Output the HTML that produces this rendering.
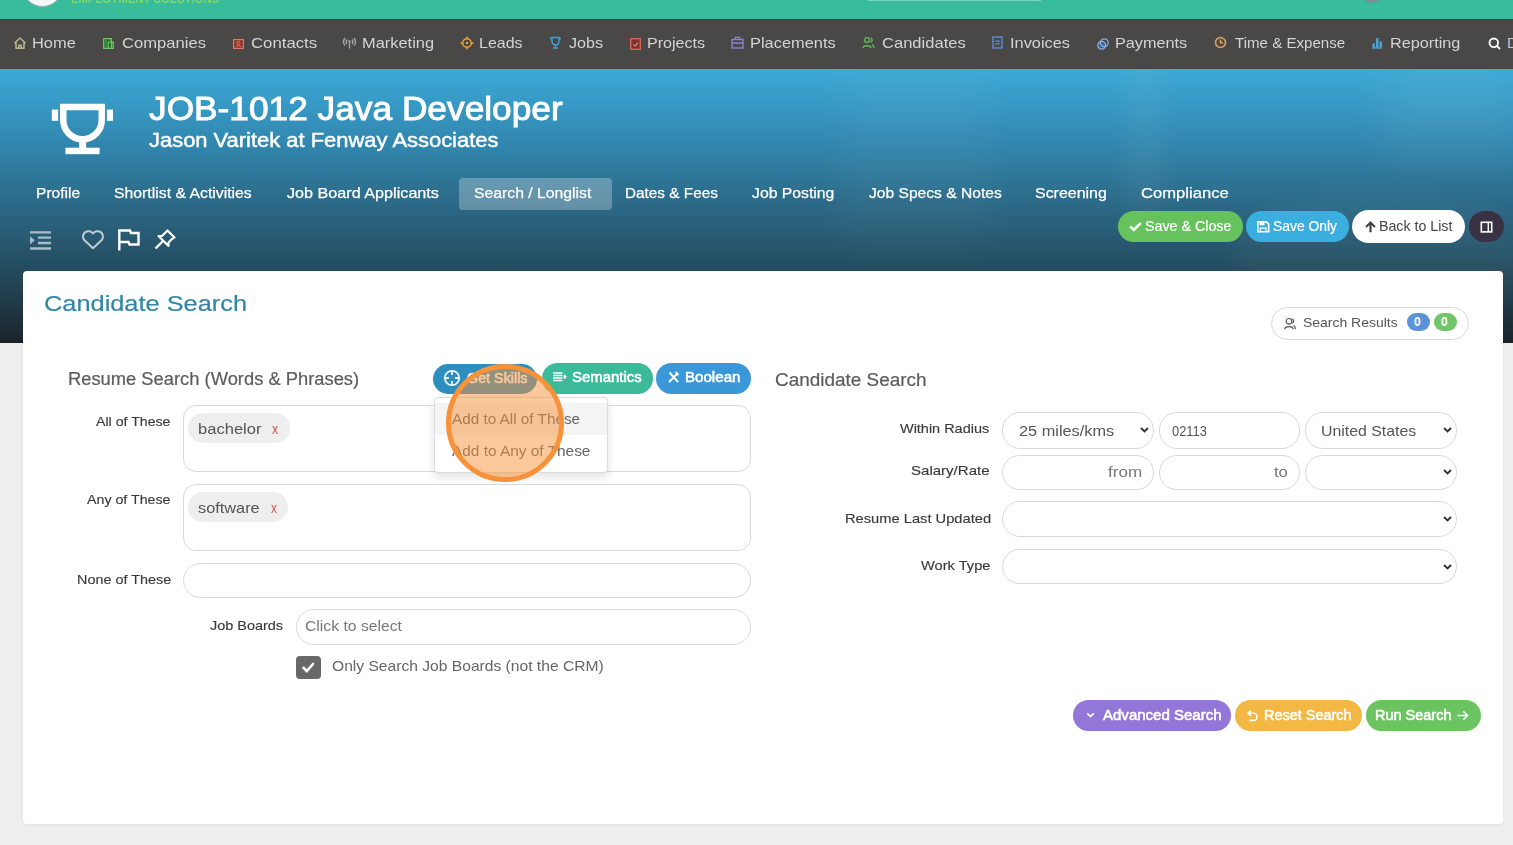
<!DOCTYPE html>
<html><head><meta charset="utf-8">
<style>
*{box-sizing:border-box;margin:0;padding:0}
html,body{width:1513px;height:845px;overflow:hidden;background:#eeeeee;font-family:"Liberation Sans",sans-serif}
body{position:relative}
.a{position:absolute}
.tx{position:absolute;line-height:1;white-space:nowrap;transform-origin:0 0}
svg{position:absolute;overflow:visible}
#topbar{left:0;top:0;width:1513px;height:19px;background:#38bc9b}
#nav{left:0;top:19px;width:1513px;height:50px;background:#4a4847}
#hero{left:0;top:69px;width:1513px;height:274px;background:linear-gradient(180deg,#3ca8d5 0px,#3697c3 40px,#3184ab 80px,#2d7090 120px,#295e78 160px,#244b5e 200px,#1f3744 240px,#1b2329 274px)}
#card{left:23px;top:271px;width:1480px;height:553px;background:#fff;border-radius:4px;box-shadow:0 1px 3px rgba(0,0,0,.06)}
.pill{position:absolute;border-radius:999px}
.inp{position:absolute;border:1px solid #d9d9d9;background:#fff;border-radius:18px}
</style></head><body>
<div id="topbar" class="a"></div>
<!-- logo -->
<div class="a" style="left:22px;top:-34px;width:41px;height:41px;border-radius:50%;background:#f4f6fa;border:1px solid #9aa;"></div>
<div class="a" style="left:866px;top:-30px;width:177px;height:31px;border-radius:4px;background:#fff;border:1px solid #7cd6c0"></div>
<div class="a" style="left:1355px;top:-30px;width:33px;height:33px;border-radius:50%;background:#8d8a90;border:1px solid #4a9"></div>
<div id="nav" class="a"></div>
<div id="hero" class="a"></div>
<div class="a" style="left:0;top:69px;width:1513px;height:274px;overflow:hidden">
<div class="a" style="left:840px;top:-20px;width:150px;height:200px;filter:blur(18px);background:rgba(255,255,255,.03)"></div>
<div class="a" style="left:1125px;top:-20px;width:40px;height:160px;filter:blur(10px);background:rgba(255,255,255,.045)"></div>
<div class="a" style="left:1380px;top:-10px;width:140px;height:100px;filter:blur(20px);background:rgba(255,255,255,.05)"></div>
<div class="a" style="left:1230px;top:120px;width:300px;height:140px;border-radius:50%;filter:blur(12px);background:rgba(255,255,255,.03)"></div>
</div>
<div class="a" style="left:459px;top:178px;width:153px;height:32px;border-radius:4px;background:rgba(255,255,255,.27)"></div>
<div id="card" class="a"></div>
<!-- nav icons -->
<svg style="left:13px;top:36px" width="14" height="14" viewBox="0 0 14 14"><path d="M1.5 7.2 L7 2 L12.5 7.2 M3 6 V12.3 H11 V6 M5.8 12.3 V9.3 H8.2 V12.3" fill="none" stroke="#b9b98f" stroke-width="1.5" stroke-linejoin="round"/></svg>
<svg style="left:103px;top:38px" width="11" height="11" viewBox="0 0 11 11"><path d="M0.7 10.3V0.7H8.3V4.2H10.3V10.3Z" fill="#2a6e2a" stroke="#6cc46c" stroke-width="1.3"/><path d="M5.3 10.3V4.2H8.5V10.3" fill="none" stroke="#6cc46c" stroke-width="1.1"/><path d="M2.6 2.8H3.6M2.6 4.8H3.6M2.6 6.8H3.6M2.6 8.6H3.6" stroke="#6cc46c" stroke-width="0.9"/></svg>
<svg style="left:232.5px;top:38.5px" width="11" height="10" viewBox="0 0 11 10"><rect x="0.6" y="0.6" width="9.8" height="8.8" fill="#8a3328" stroke="#e07a6a" stroke-width="1.2"/><circle cx="5.5" cy="3.8" r="1.6" fill="none" stroke="#e8806e" stroke-width="1"/><path d="M2.8 8.2c.5-2 4.9-2 5.4 0" fill="none" stroke="#e8806e" stroke-width="1"/></svg>
<svg style="left:343px;top:36px" width="13" height="13" viewBox="0 0 13 13"><circle cx="6.5" cy="5.5" r="1.3" fill="#aaa"/><path d="M6.5 6.5V12.5M4 3.5a3.5 3.5 0 0 0 0 4.5M9 3.5a3.5 3.5 0 0 1 0 4.5M2 2a6 6 0 0 0 0 7.5M11 2a6 6 0 0 1 0 7.5" fill="none" stroke="#aaa" stroke-width="1.3"/></svg>
<svg style="left:460px;top:36px" width="14" height="14" viewBox="0 0 14 14"><circle cx="7" cy="7" r="4.3" fill="none" stroke="#e8a835" stroke-width="1.5"/><circle cx="7" cy="7" r="1.3" fill="#e8a835"/><path d="M7 0.5V2.7M7 11.3V13.5M0.5 7H2.7M11.3 7H13.5" stroke="#e8a835" stroke-width="1.5"/></svg>
<svg style="left:549px;top:36px" width="13" height="13" viewBox="0 0 13 13"><path d="M3 1.5H10V5.5A3.5 3.5 0 0 1 3 5.5Z" fill="none" stroke="#3ea4d8" stroke-width="1.5"/><path d="M1 2.5H3M10 2.5H12M6.5 9V11M4 12H9" stroke="#3ea4d8" stroke-width="1.5"/></svg>
<svg style="left:629.5px;top:37.5px" width="11" height="12" viewBox="0 0 11 12"><rect x="0.7" y="0.7" width="9.6" height="10.6" fill="#7e332c" stroke="#d96a62" stroke-width="1.3"/><path d="M3.3 6.3L5.2 8L8 4.6" fill="none" stroke="#e08880" stroke-width="1.1"/></svg>
<svg style="left:731px;top:36px" width="13" height="13" viewBox="0 0 13 13"><rect x="1" y="3.5" width="11" height="8.5" fill="none" stroke="#8e7fd0" stroke-width="1.4"/><path d="M4.3 3.5V1.3H8.7V3.5M1 7H12M6.5 6.5V8" fill="none" stroke="#8e7fd0" stroke-width="1.3"/></svg>
<svg style="left:862px;top:36px" width="13" height="13" viewBox="0 0 13 13"><circle cx="5" cy="4" r="2.4" fill="none" stroke="#5cb85c" stroke-width="1.4"/><path d="M1 12.3c0-3.5 8-3.5 8 0M8.5 1.8a2.3 2.3 0 0 1 0 4.4M10 8.5c1.5.6 2 2 2 3.8" fill="none" stroke="#5cb85c" stroke-width="1.4"/></svg>
<svg style="left:992px;top:36px" width="11" height="13" viewBox="0 0 11 13"><rect x="1" y="1" width="9" height="11" fill="none" stroke="#5a8ed8" stroke-width="1.4"/><path d="M3.3 5.2H7.7M3.3 7.8H7.7" stroke="#5a8ed8" stroke-width="1.2"/></svg>
<svg style="left:1097px;top:37.5px" width="12" height="12" viewBox="0 0 12 12"><circle cx="4.7" cy="7.3" r="3.9" fill="#3d5f9a" stroke="#8fb0e0" stroke-width="1.3"/><circle cx="7.3" cy="4.7" r="3.9" fill="none" stroke="#8fb0e0" stroke-width="1.3"/></svg>
<svg style="left:1214px;top:36px" width="13" height="13" viewBox="0 0 13 13"><circle cx="6.5" cy="6.5" r="5" fill="none" stroke="#e0a060" stroke-width="1.6"/><path d="M6.5 3.5V6.8H9" fill="none" stroke="#e0a060" stroke-width="1.4"/></svg>
<svg style="left:1371px;top:36px" width="12" height="13" viewBox="0 0 12 13"><path d="M1 12H11" stroke="#4aa5d5" stroke-width="1.4"/><rect x="1.5" y="7.5" width="2.5" height="4" fill="#4aa5d5"/><rect x="5" y="2" width="2.5" height="9.5" fill="#4aa5d5"/><rect x="8.5" y="5.5" width="2.5" height="6" fill="#4aa5d5"/></svg>
<svg style="left:1487.5px;top:37px" width="13" height="13" viewBox="0 0 13 13"><circle cx="5.8" cy="5.8" r="4.3" fill="none" stroke="#fff" stroke-width="1.8"/><path d="M9 9L12 12" stroke="#fff" stroke-width="1.8"/></svg>
<!-- trophy -->
<svg style="left:51px;top:103px" width="63" height="52" viewBox="0 0 63 52"><path d="M12.25 4 H50.75 V17 A19.25 19.25 0 0 1 12.25 17 Z" fill="none" stroke="#fff" stroke-width="6.5"/><rect x="0.8" y="6.6" width="6.3" height="11.2" fill="#fff"/><rect x="55.9" y="6.6" width="6.1" height="11.2" fill="#fff"/><rect x="28.2" y="38" width="7" height="8" fill="#fff"/><rect x="14.4" y="44.7" width="34.2" height="6.5" fill="#fff"/></svg>
<!-- outdent / heart / flag / pin -->
<svg style="left:30px;top:231px" width="21" height="19" viewBox="0 0 21 19"><path d="M0 1.3H21M8 6.7H21M8 12H21M0 17.5H21" stroke="#a6bcc8" stroke-width="2.3"/><path d="M0 5.2L4.8 9.3L0 13.4Z" fill="#a6bcc8"/></svg>
<svg style="left:81px;top:230px" width="24" height="20" viewBox="0 0 24 20"><path d="M12 18.3 L3 9.8 A5.2 5.2 0 0 1 12 3.5 A5.2 5.2 0 0 1 21 9.8 Z" fill="none" stroke="#c3cbcf" stroke-width="2" stroke-linejoin="round"/></svg>
<svg style="left:118px;top:229px" width="22" height="22" viewBox="0 0 22 22"><path d="M1.3 21.5V1.5H12L13 4H20.5V15.5H11.5L10.5 13H1.3" fill="none" stroke="#fff" stroke-width="2.4" stroke-linejoin="miter"/></svg>
<svg style="left:154px;top:229px" width="22" height="21" viewBox="0 0 22 21"><path d="M13.5 1.5L20.5 8.5L18.5 9.5L14.5 13.5L14.5 17L4.5 7L8 7L12 3Z" fill="none" stroke="#fff" stroke-width="2.2" stroke-linejoin="round"/><path d="M9 12L1.5 19.5" stroke="#fff" stroke-width="2.4"/></svg>
<!-- header buttons -->
<div class="pill" style="left:1118px;top:211px;width:125px;height:31px;background:#66c25d"></div>
<svg style="left:1129px;top:221px" width="13" height="11" viewBox="0 0 13 11"><path d="M1.2 5.5L4.8 9L11.8 1.8" fill="none" stroke="#fff" stroke-width="2.6"/></svg>
<div class="pill" style="left:1246px;top:211px;width:103px;height:31px;background:#3baee0"></div>
<svg style="left:1257px;top:221px" width="12.5" height="11.5" viewBox="0 0 12.5 11.5"><path d="M0.8 0.8H9.3L11.7 3.2V10.7H0.8Z" fill="none" stroke="#fff" stroke-width="1.6"/><rect x="2.5" y="1" width="5" height="3.2" fill="#fff"/><path d="M3.4 10.5V7.2H9.1V10.5" fill="none" stroke="#fff" stroke-width="1.3"/></svg>
<div class="pill" style="left:1352px;top:210px;width:113px;height:33px;background:#fff"></div>
<svg style="left:1364px;top:220px" width="13" height="13" viewBox="0 0 13 13"><path d="M6.5 1L1.3 6.2L2.8 7.7L5.4 5.1V12.3H7.6V5.1L10.2 7.7L11.7 6.2Z" fill="#444"/></svg>
<div class="pill" style="left:1469px;top:211px;width:35px;height:31px;background:#3a3242"></div>
<svg style="left:1480px;top:220.5px" width="13" height="12" viewBox="0 0 13 12"><rect x="1.3" y="1.3" width="10.4" height="9.6" fill="none" stroke="#fff" stroke-width="1.6"/><path d="M8.3 1.3V10.9" stroke="#fff" stroke-width="1.4"/></svg>
<!-- search results pill -->
<div class="pill" style="left:1271px;top:307px;width:198px;height:33px;border:1px solid #d9d9d9;background:#fff"></div>
<svg style="left:1284px;top:317px" width="12" height="13" viewBox="0 0 12 13"><circle cx="5" cy="4.3" r="2.8" fill="none" stroke="#555" stroke-width="1.2"/><path d="M0.8 12.3c0-3.6 8.4-3.6 8.4 0M8.3 1.7a2.6 2.6 0 0 1 0 4.6M9.6 8.3c1.2.6 1.8 2 1.8 4" fill="none" stroke="#555" stroke-width="1.2"/></svg>
<div class="pill" style="left:1407px;top:313px;width:23px;height:18px;background:#5b93d9"></div>
<div class="pill" style="left:1434px;top:313px;width:23px;height:18px;background:#72c66a"></div>
<!-- skills buttons -->
<div class="pill" style="left:433px;top:364px;width:104px;height:30px;background:#2e8fbf"></div>
<svg style="left:443px;top:369px" width="18" height="18" viewBox="0 0 18 18"><circle cx="9" cy="9" r="7.2" fill="none" stroke="#e8f6fa" stroke-width="1.8"/><path d="M9 1.5V6M9 12V16.5M1.5 9H6M12 9H16.5" stroke="#e8f6fa" stroke-width="1.8"/></svg>
<div class="pill" style="left:542px;top:363px;width:111px;height:31px;background:#3cb998"></div>
<svg style="left:552.5px;top:372px" width="14" height="10" viewBox="0 0 14 10"><path d="M0 1H9.5M0 3.5H9.5M0 6H9.5M0 8.5H9.5" stroke="#fff" stroke-width="1.7"/><path d="M11.7 2.2L13.7 4.8L11.7 7.4L10.3 4.8Z" fill="#fff"/></svg>
<div class="pill" style="left:656px;top:363px;width:95px;height:31px;background:#3a98d8"></div>
<svg style="left:668px;top:371px" width="11" height="12" viewBox="0 0 11 12"><path d="M1 11L10 2M1.5 1.5L10 11M7.5 1L10.5 4" fill="none" stroke="#fff" stroke-width="1.9"/></svg>
<!-- left inputs -->
<div class="inp" style="left:183px;top:405px;width:568px;height:67px;border-radius:13px"></div>
<div class="pill" style="left:188px;top:413px;width:102px;height:30px;background:#eeeeee"></div>
<div class="inp" style="left:183px;top:484px;width:568px;height:67px;border-radius:13px"></div>
<div class="pill" style="left:188px;top:492px;width:100px;height:30px;background:#eeeeee"></div>
<div class="inp" style="left:183px;top:563px;width:568px;height:35px"></div>
<div class="inp" style="left:296px;top:609px;width:455px;height:36px"></div>
<div class="a" style="left:296px;top:656px;width:25px;height:23px;border-radius:4px;background:#686868"></div>
<svg style="left:301px;top:661px" width="15" height="13" viewBox="0 0 15 13"><path d="M2.5 6.8L5.8 10L12 3" fill="none" stroke="#fff" stroke-width="2.6" stroke-linecap="round"/></svg>
<!-- right inputs -->
<div class="inp" style="left:1002px;top:412px;width:152px;height:37px"></div>
<div class="inp" style="left:1159px;top:412px;width:141px;height:37px"></div>
<div class="inp" style="left:1305px;top:412px;width:152px;height:37px"></div>
<div class="inp" style="left:1002px;top:455px;width:152px;height:35px"></div>
<div class="inp" style="left:1159px;top:455px;width:141px;height:35px"></div>
<div class="inp" style="left:1305px;top:455px;width:152px;height:35px"></div>
<div class="inp" style="left:1002px;top:501px;width:455px;height:36px"></div>
<div class="inp" style="left:1002px;top:549px;width:455px;height:35px"></div>
<svg style="left:1140px;top:427px" width="9" height="6" viewBox="0 0 9 6"><path d="M1 1L4.5 4.5L8 1" fill="none" stroke="#333" stroke-width="1.9"/></svg>
<svg style="left:1443px;top:427px" width="9" height="6" viewBox="0 0 9 6"><path d="M1 1L4.5 4.5L8 1" fill="none" stroke="#333" stroke-width="1.9"/></svg>
<svg style="left:1443px;top:469px" width="9" height="6" viewBox="0 0 9 6"><path d="M1 1L4.5 4.5L8 1" fill="none" stroke="#333" stroke-width="1.9"/></svg>
<svg style="left:1443px;top:516px" width="9" height="6" viewBox="0 0 9 6"><path d="M1 1L4.5 4.5L8 1" fill="none" stroke="#333" stroke-width="1.9"/></svg>
<svg style="left:1443px;top:564px" width="9" height="6" viewBox="0 0 9 6"><path d="M1 1L4.5 4.5L8 1" fill="none" stroke="#333" stroke-width="1.9"/></svg>
<!-- bottom buttons -->
<div class="pill" style="left:1073px;top:700px;width:158px;height:31px;background:#9277d8"></div>
<svg style="left:1086px;top:712px" width="9" height="6" viewBox="0 0 9 6"><path d="M1.3 1.3L4.5 4.5L7.7 1.3" fill="none" stroke="#fff" stroke-width="1.7"/></svg>
<div class="pill" style="left:1235px;top:700px;width:127px;height:31px;background:#f3b743"></div>
<svg style="left:1246px;top:709px" width="13" height="13" viewBox="0 0 13 13"><path d="M3 4.2H7.5A3.6 3.6 0 0 1 7.5 11.4H3.5M5 1.5L2.2 4.2L5 7" fill="none" stroke="#fff" stroke-width="1.6"/></svg>
<div class="pill" style="left:1366px;top:700px;width:115px;height:31px;background:#6cc460"></div>
<svg style="left:1457px;top:710px" width="12" height="11" viewBox="0 0 12 11"><path d="M0.5 5.5H10.5M6.3 1.3L10.5 5.5L6.3 9.7" fill="none" stroke="#fff" stroke-width="1.6"/></svg>
<!-- dropdown -->
<div class="a" style="left:434px;top:397px;width:174px;height:76px;background:#fff;border:1px solid #dcdcdc;border-radius:4px;box-shadow:0 4px 10px rgba(0,0,0,.12)"></div>
<div class="a" style="left:435px;top:403px;width:172px;height:32px;background:#f4f4f4"></div>

<div class="tx" id="t0" style="left:31.9px;top:35.30px;font-size:15px;color:#d4d4d4;transform:scaleX(1.0939);">Home</div>
<div class="tx" id="t1" style="left:121.6px;top:35.30px;font-size:15px;color:#d4d4d4;transform:scaleX(1.1065);">Companies</div>
<div class="tx" id="t2" style="left:251.0px;top:35.30px;font-size:15px;color:#d4d4d4;transform:scaleX(1.1177);">Contacts</div>
<div class="tx" id="t3" style="left:361.9px;top:35.30px;font-size:15px;color:#d4d4d4;transform:scaleX(1.0943);">Marketing</div>
<div class="tx" id="t4" style="left:478.9px;top:35.30px;font-size:15px;color:#d4d4d4;transform:scaleX(1.0668);">Leads</div>
<div class="tx" id="t5" style="left:568.5px;top:35.30px;font-size:15px;color:#d4d4d4;transform:scaleX(1.0742);">Jobs</div>
<div class="tx" id="t6" style="left:646.9px;top:35.30px;font-size:15px;color:#d4d4d4;transform:scaleX(1.0724);">Projects</div>
<div class="tx" id="t7" style="left:749.9px;top:35.30px;font-size:15px;color:#d4d4d4;transform:scaleX(1.0928);">Placements</div>
<div class="tx" id="t8" style="left:881.8px;top:35.30px;font-size:15px;color:#d4d4d4;transform:scaleX(1.1036);">Candidates</div>
<div class="tx" id="t9" style="left:1010.3px;top:35.30px;font-size:15px;color:#d4d4d4;transform:scaleX(1.0910);">Invoices</div>
<div class="tx" id="t10" style="left:1115.3px;top:35.30px;font-size:15px;color:#d4d4d4;transform:scaleX(1.0829);">Payments</div>
<div class="tx" id="t11" style="left:1234.7px;top:35.30px;font-size:15px;color:#d4d4d4;transform:scaleX(1.0060);">Time &amp; Expense</div>
<div class="tx" id="t12" style="left:1389.9px;top:35.30px;font-size:15px;color:#d4d4d4;transform:scaleX(1.0817);">Reporting</div>
<div class="tx" id="t13" style="left:1507.0px;top:35.30px;font-size:15px;color:#c4c4c4;">D</div>
<div class="tx" id="t14" style="left:71.0px;top:-6.66px;font-size:12px;color:#7fd66a;font-weight:bold;transform:scaleX(0.9380);">EMPLOYMENT SOLUTIONS</div>
<div class="tx" id="t15" style="left:148.7px;top:92.37px;font-size:33px;color:#fff;-webkit-text-stroke:0.9px #fff;transform:scaleX(1.0688);">JOB-1012 Java Developer</div>
<div class="tx" id="t16" style="left:148.7px;top:131.09px;font-size:19.5px;color:#fff;-webkit-text-stroke:0.45px #fff;transform:scaleX(1.1246);">Jason Varitek at Fenway Associates</div>
<div class="tx" id="t17" style="left:35.9px;top:185.30px;font-size:15px;color:#fff;-webkit-text-stroke:0.25px #fff;transform:scaleX(1.0370);">Profile</div>
<div class="tx" id="t18" style="left:113.9px;top:185.30px;font-size:15px;color:#fff;-webkit-text-stroke:0.25px #fff;transform:scaleX(1.0526);">Shortlist &amp; Activities</div>
<div class="tx" id="t19" style="left:287.0px;top:185.30px;font-size:15px;color:#fff;-webkit-text-stroke:0.25px #fff;transform:scaleX(1.0782);">Job Board Applicants</div>
<div class="tx" id="t20" style="left:473.8px;top:185.30px;font-size:15px;color:#fff;-webkit-text-stroke:0.25px #fff;transform:scaleX(1.0501);">Search / Longlist</div>
<div class="tx" id="t21" style="left:625.3px;top:185.30px;font-size:15px;color:#fff;-webkit-text-stroke:0.25px #fff;transform:scaleX(1.0216);">Dates &amp; Fees</div>
<div class="tx" id="t22" style="left:752.2px;top:185.30px;font-size:15px;color:#fff;-webkit-text-stroke:0.25px #fff;transform:scaleX(1.0507);">Job Posting</div>
<div class="tx" id="t23" style="left:868.8px;top:185.30px;font-size:15px;color:#fff;-webkit-text-stroke:0.25px #fff;transform:scaleX(1.0404);">Job Specs &amp; Notes</div>
<div class="tx" id="t24" style="left:1035.4px;top:185.30px;font-size:15px;color:#fff;-webkit-text-stroke:0.25px #fff;transform:scaleX(1.0625);">Screening</div>
<div class="tx" id="t25" style="left:1141.0px;top:185.30px;font-size:15px;color:#fff;-webkit-text-stroke:0.25px #fff;transform:scaleX(1.1083);">Compliance</div>
<div class="tx" id="t26" style="left:1145.4px;top:219.33px;font-size:14.5px;color:#fff;-webkit-text-stroke:0.2px #fff;transform:scaleX(0.9831);">Save &amp; Close</div>
<div class="tx" id="t27" style="left:1272.5px;top:219.33px;font-size:14.5px;color:#fff;-webkit-text-stroke:0.2px #fff;transform:scaleX(0.9565);">Save Only</div>
<div class="tx" id="t28" style="left:1379.4px;top:219.33px;font-size:14.5px;color:#444;transform:scaleX(0.9794);">Back to List</div>
<div class="tx" id="t29" style="left:43.9px;top:292.95px;font-size:22.5px;color:#2f86a6;-webkit-text-stroke:0.2px #2f86a6;transform:scaleX(1.1271);">Candidate Search</div>
<div class="tx" id="t30" style="left:1302.6px;top:315.67px;font-size:13.5px;color:#555;transform:scaleX(1.0339);">Search Results</div>
<div class="tx" id="t31" style="left:1414.0px;top:315.84px;font-size:12px;color:#fff;font-weight:bold;">0</div>
<div class="tx" id="t32" style="left:1441.0px;top:315.84px;font-size:12px;color:#fff;font-weight:bold;">0</div>
<div class="tx" id="t33" style="left:68.3px;top:371.19px;font-size:17.5px;color:#5c5c5c;-webkit-text-stroke:0.2px #5c5c5c;transform:scaleX(1.0478);">Resume Search (Words &amp; Phrases)</div>
<div class="tx" id="t34" style="left:466.5px;top:371.15px;font-size:14px;color:#fff;-webkit-text-stroke:0.55px #fff;transform:scaleX(1.0233);">Get Skills</div>
<div class="tx" id="t35" style="left:571.8px;top:370.15px;font-size:14px;color:#fff;-webkit-text-stroke:0.55px #fff;transform:scaleX(1.0649);">Semantics</div>
<div class="tx" id="t36" style="left:684.9px;top:370.15px;font-size:14px;color:#fff;-webkit-text-stroke:0.55px #fff;transform:scaleX(1.0788);">Boolean</div>
<div class="tx" id="t37" style="left:775.3px;top:371.59px;font-size:17.5px;color:#5c5c5c;-webkit-text-stroke:0.2px #5c5c5c;transform:scaleX(1.0814);">Candidate Search</div>
<div class="tx" id="t38" style="left:96.4px;top:414.77px;font-size:13.5px;color:#3a3a3a;-webkit-text-stroke:0.15px #3a3a3a;transform:scaleX(1.0484);">All of These</div>
<div class="tx" id="t39" style="left:87.4px;top:493.27px;font-size:13.5px;color:#3a3a3a;-webkit-text-stroke:0.15px #3a3a3a;transform:scaleX(1.0527);">Any of These</div>
<div class="tx" id="t40" style="left:76.7px;top:572.57px;font-size:13.5px;color:#3a3a3a;-webkit-text-stroke:0.15px #3a3a3a;transform:scaleX(1.0661);">None of These</div>
<div class="tx" id="t41" style="left:210.4px;top:618.57px;font-size:13.5px;color:#3a3a3a;-webkit-text-stroke:0.15px #3a3a3a;transform:scaleX(1.0694);">Job Boards</div>
<div class="tx" id="t42" style="left:197.5px;top:420.60px;font-size:15px;color:#555;transform:scaleX(1.1035);">bachelor</div>
<div class="tx" id="t43" style="left:271.8px;top:420.60px;font-size:15px;color:#d9534f;transform:scaleX(0.8250);">x</div>
<div class="tx" id="t44" style="left:197.5px;top:499.60px;font-size:15px;color:#555;transform:scaleX(1.0879);">software</div>
<div class="tx" id="t45" style="left:270.6px;top:499.60px;font-size:15px;color:#d9534f;transform:scaleX(0.8000);">x</div>
<div class="tx" id="t46" style="left:304.6px;top:617.70px;font-size:15px;color:#777;transform:scaleX(1.0476);">Click to select</div>
<div class="tx" id="t47" style="left:332.0px;top:658.30px;font-size:15px;color:#666;transform:scaleX(1.0412);">Only Search Job Boards (not the CRM)</div>
<div class="tx" id="t48" style="left:451.6px;top:411.95px;font-size:14px;color:#666;transform:scaleX(1.0920);">Add to All of These</div>
<div class="tx" id="t49" style="left:451.6px;top:443.75px;font-size:14px;color:#666;transform:scaleX(1.1002);">Add to Any of These</div>
<div class="tx" id="t50" style="left:900.0px;top:422.07px;font-size:13.5px;color:#3a3a3a;-webkit-text-stroke:0.15px #3a3a3a;transform:scaleX(1.0703);">Within Radius</div>
<div class="tx" id="t51" style="left:911.4px;top:464.37px;font-size:13.5px;color:#3a3a3a;-webkit-text-stroke:0.15px #3a3a3a;transform:scaleX(1.1139);">Salary/Rate</div>
<div class="tx" id="t52" style="left:844.5px;top:511.77px;font-size:13.5px;color:#3a3a3a;-webkit-text-stroke:0.15px #3a3a3a;transform:scaleX(1.0872);">Resume Last Updated</div>
<div class="tx" id="t53" style="left:920.8px;top:558.57px;font-size:13.5px;color:#3a3a3a;-webkit-text-stroke:0.15px #3a3a3a;transform:scaleX(1.0853);">Work Type</div>
<div class="tx" id="t54" style="left:1018.5px;top:422.60px;font-size:15px;color:#555;transform:scaleX(1.0883);">25 miles/kms</div>
<div class="tx" id="t55" style="left:1171.5px;top:422.80px;font-size:15px;color:#555;transform:scaleX(0.8570);">02113</div>
<div class="tx" id="t56" style="left:1320.7px;top:422.80px;font-size:15px;color:#555;transform:scaleX(1.0570);">United States</div>
<div class="tx" id="t57" style="left:1107.9px;top:463.80px;font-size:15px;color:#777;transform:scaleX(1.1388);">from</div>
<div class="tx" id="t58" style="left:1273.8px;top:463.80px;font-size:15px;color:#777;transform:scaleX(1.1095);">to</div>
<div class="tx" id="t59" style="left:1102.7px;top:708.15px;font-size:14px;color:#fff;-webkit-text-stroke:0.55px #fff;transform:scaleX(1.0726);">Advanced Search</div>
<div class="tx" id="t60" style="left:1263.5px;top:708.15px;font-size:14px;color:#fff;-webkit-text-stroke:0.55px #fff;transform:scaleX(1.0333);">Reset Search</div>
<div class="tx" id="t61" style="left:1375.4px;top:708.15px;font-size:14px;color:#fff;-webkit-text-stroke:0.55px #fff;transform:scaleX(1.0340);">Run Search</div>
<div class="a" style="left:445.8px;top:364px;width:118px;height:118px;border-radius:50%;background:rgba(247,146,58,.5);border:5px solid #f7923a"></div>

</body></html>
